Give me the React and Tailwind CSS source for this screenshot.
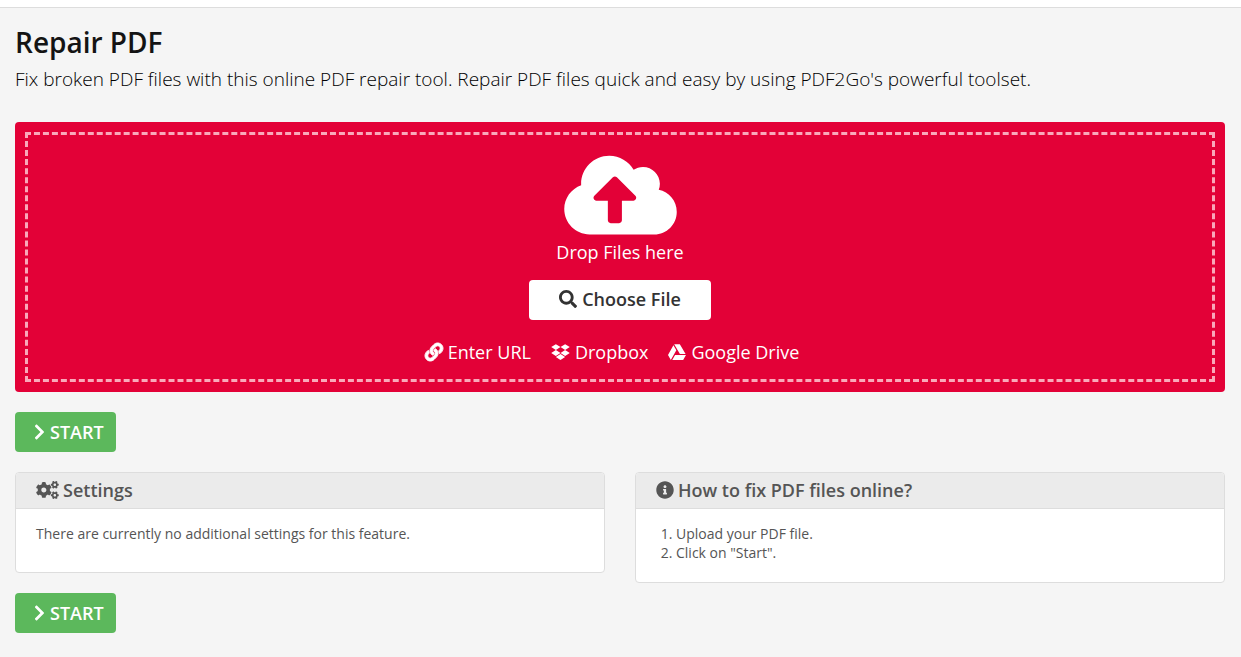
import React, { useRef } from 'react';
import {
  FaChevronRight,
  FaCloudUploadAlt,
  FaCogs,
  FaDropbox,
  FaGoogleDrive,
  FaInfoCircle,
  FaLink,
  FaSearch,
} from 'react-icons/fa';

const SOURCES = [
  {
    label: 'Enter URL',
    icon: FaLink,
    iconClass: 'h-[18px] w-[18px] overflow-visible stroke-current stroke-[28px]',
  },
  { label: 'Dropbox', icon: FaDropbox, iconClass: 'h-[18px] w-[19px]' },
  { label: 'Google Drive', icon: FaGoogleDrive, iconClass: 'h-[18px] w-[18px]' },
];

const STEPS = ['Upload your PDF file.', 'Click on "Start".'];

function StartButton() {
  return (
    <button
      type="button"
      className="flex h-10 items-center gap-[5px] rounded-[4px] bg-[#5cb85c] pr-3 pl-[19px] text-lg font-semibold text-white hover:bg-[#4cae4c]"
    >
      <FaChevronRight className="h-[18px] w-[11px]" />
      START
    </button>
  );
}

function Panel({ icon: Icon, iconClass, title, children }) {
  return (
    <section className="overflow-hidden rounded-[4px] border border-[#dddddd] bg-white">
      <h2 className="flex items-center gap-1 border-b border-[#dddddd] bg-[#ebebeb] px-5 pt-1 pb-[5px] text-lg leading-[26px] font-semibold text-[#555555]">
        <Icon className={iconClass} />
        {title}
      </h2>
      <div className="px-5 py-[15px] text-sm leading-[19px] text-[#555555]">{children}</div>
    </section>
  );
}

// Dashed drop area with the local file picker and the remote sources below it
function DropZone() {
  const fileRef = useRef(null);

  return (
    <div className="rounded-[4px] bg-[#e30137] p-[10px]">
      <div className="flex flex-col items-center border-3 border-dashed border-[#f9a9ba] pt-[15px] pb-[15px] text-lg text-white">
        <FaCloudUploadAlt className="h-[90px] w-[113px]" />
        <p className="leading-6">Drop Files here</p>
        <input ref={fileRef} type="file" aria-label="Choose File" className="hidden" />
        <button
          type="button"
          onClick={() => fileRef.current.click()}
          className="mt-4 flex h-10 items-center gap-[5px] rounded-[4px] bg-white px-[30px] pb-[2px] font-semibold text-[#333333]"
        >
          <FaSearch />
          Choose File
        </button>
        <div className="mt-5 flex gap-5 pr-4 leading-6">
          {SOURCES.map(({ label, icon: Icon, iconClass }) => (
            <a key={label} href="#" className="flex items-center gap-[5px] hover:underline">
              <Icon className={iconClass} />
              {label}
            </a>
          ))}
        </div>
      </div>
    </div>
  );
}

export default function App() {
  return (
    <div className="min-h-screen bg-[#f5f5f5] font-['Open_Sans',sans-serif]">
      <header className="h-2 border-b border-[#dddddd] bg-white" />
      <main className="pt-4 pr-4 pb-6 pl-[15px]">
        <h1 className="text-[28px] leading-9 font-semibold text-[#141414]">Repair PDF</h1>
        <p className="mt-[6px] mb-[30px] text-[19px] leading-[26px] font-light text-black">
          Fix broken PDF files with this online PDF repair tool. Repair PDF files quick and easy by
          using PDF2Go's powerful toolset.
        </p>

        <DropZone />

        <div className="my-5">
          <StartButton />
        </div>

        <div className="grid items-start gap-[30px] md:grid-cols-2">
          <Panel icon={FaCogs} iconClass="h-[18px] w-[23px]" title="Settings">
            <p className="pb-[14px]">There are currently no additional settings for this feature.</p>
          </Panel>
          <Panel
            icon={FaInfoCircle}
            iconClass="h-[18px] w-[18px]"
            title="How to fix PDF files online?"
          >
            <ol className="list-decimal pb-[5px] pl-5">
              {STEPS.map((step) => (
                <li key={step}>{step}</li>
              ))}
            </ol>
          </Panel>
        </div>

        <div className="mt-[10px]">
          <StartButton />
        </div>
      </main>
    </div>
  );
}
